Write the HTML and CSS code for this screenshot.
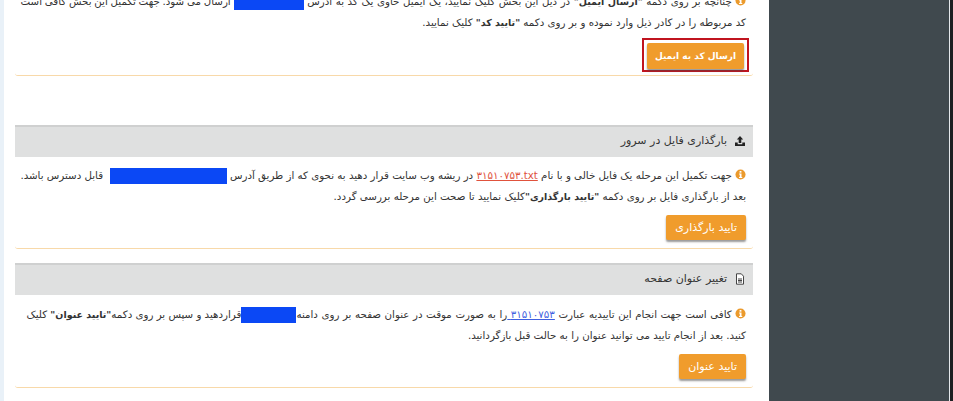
FILE: index.html
```html
<!DOCTYPE html>
<html lang="fa" dir="rtl">
<head>
<meta charset="utf-8">
<title>تایید مالکیت</title>
<link rel="stylesheet" href="styles.css">
</head>
<body>
<div class="page">
  <aside class="rail-end"></aside>
  <aside class="sidebar"></aside>
  <main class="main">
    <section class="panel panel-first">
      <div class="body">
        <p class="text"><svg class="info" viewBox="0 0 12 12"><circle cx="6" cy="6" r="5.5"/><rect class="i" x="5" y="2.2" width="2" height="1.8"/><path class="i" d="M4.4 5h2.7v3.7h.8v1H4.4v-1h.8V6h-.8z"/></svg> <span class="loose">چنانچه بر روی دکمه <b>"ارسال ایمیل"</b> در ذیل این بخش کلیک نمایید، یک ایمیل حاوی یک کد به آدرس</span> <span class="mask m1"></span> <span class="snug">ارسال می شود. جهت تکمیل این بخش کافی است</span><br>کد مربوطه را در کادر ذیل وارد نموده و بر روی دکمه <b>"تایید کد"</b> کلیک نمایید.</p>
        <div class="outline"><button class="btn btn-bold">ارسال کد به ایمیل</button></div>
      </div>
    </section>
    <section class="panel panel-second">
      <h3 class="head"><svg class="hicon" viewBox="0 0 12 12"><path d="M6 1 9.2 4.4H7.3V8H4.7V4.4H2.8z"/><path d="M1 7.6h2.7v1.6h4.6V7.6H11V11H1z"/></svg> بارگذاری فایل در سرور</h3>
      <div class="body">
        <p class="text"><svg class="info" viewBox="0 0 12 12"><circle cx="6" cy="6" r="5.5"/><rect class="i" x="5" y="2.2" width="2" height="1.8"/><path class="i" d="M4.4 5h2.7v3.7h.8v1H4.4v-1h.8V6h-.8z"/></svg> جهت تکمیل این مرحله یک فایل خالی و با نام <a class="red" href="#">۳۱۵۱۰۷۵۳.txt</a> در ریشه وب سایت قرار دهید به نحوی که از طریق آدرس <span class="mask m2"></span> &nbsp;قابل دسترس باشد.<br>بعد از بارگذاری فایل بر روی دکمه <b>"تایید بارگذاری"</b>کلیک نمایید تا صحت این مرحله بررسی گردد.</p>
        <button class="btn">تایید بارگذاری</button>
      </div>
    </section>
    <section class="panel">
      <h3 class="head"><svg class="hicon" viewBox="0 0 12 12"><path class="doc" d="M2.5.8h4.8l2.2 2.4v8H2.5z"/><path class="lines" d="M4 6h4M4 7.5h4M4 9h4"/></svg> تغییر عنوان صفحه</h3>
      <div class="body">
        <p class="text"><svg class="info" viewBox="0 0 12 12"><circle cx="6" cy="6" r="5.5"/><rect class="i" x="5" y="2.2" width="2" height="1.8"/><path class="i" d="M4.4 5h2.7v3.7h.8v1H4.4v-1h.8V6h-.8z"/></svg> <span class="loose">کافی است جهت انجام این تاییدیه عبارت <a class="blue" href="#">۳۱۵۱۰۷۵۳ </a>را به صورت موقت در عنوان صفحه بر روی دامنه</span><span class="mask m3"></span>قراردهید و سپس بر روی دکمه<b>"تایید عنوان"</b> کلیک<br>کنید. بعد از انجام تایید می توانید عنوان را به حالت قبل بازگردانید.</p>
        <button class="btn">تایید عنوان</button>
      </div>
    </section>
  </main>
  <aside class="rail-start"></aside>
</div>
</body>
</html>
```

FILE: styles.css
```css
* { box-sizing: border-box; }
html, body { margin: 0; height: 401px; overflow: hidden; background: #fff; }
body { font-family: "DejaVu Sans", sans-serif; color: #333; }
.page { display: flex; height: 401px; overflow: hidden; }
.rail-end { width: 3px; background: #1c2022; }
.sidebar { width: 181px; background: #40494e; border-right: 1px solid #e4e8ec; }
.main { width: 765px; padding: 0 16px 0 11px; background: #fff; }
.rail-start { width: 4px; background: #e9f1f8; }
.panel { margin-bottom: 14px; border-bottom: 1px solid #f8d9a9; border-radius: 0 0 3px 3px; }
.panel-first { margin-top: -9px; margin-bottom: 49px; }
.head { display: flex; align-items: center; gap: 7px; height: 32px; margin: 0; padding: 0 7px 3px; font-size: 11px; font-weight: 400; color: #333; background: #dfe0e0; border-top: 2px solid #cfd0d0; }
.hicon { width: 12px; height: 12px; fill: #222; flex: none; }
.doc { fill: #fff; stroke: #444; stroke-width: 1; }
.lines { fill: none; stroke: #444; stroke-width: 1; }
.body { padding: 9px 7px 8px; }
.panel-second .body { padding-top: 8px; }
.panel-first .body { padding: 0 7px 3px; }
.text { height: 42px; margin: 0 0 8px; font-size: 10.25px; line-height: 21px; white-space: nowrap; }
.panel-first .text { margin-bottom: 5px; }
.text b { font-size: 9.5px; }
.loose { word-spacing: .3px; }
.snug { word-spacing: -.5px; }
.info { width: 11px; height: 11px; vertical-align: -1px; fill: #eb9a2c; }
.info .i { fill: #fff; }
.mask { display: inline-block; height: 16px; background: #0b48f5; vertical-align: middle; }
.m1 { width: 70px; }
.m2 { width: 117px; }
.m3 { width: 55px; }
.red { color: #e0523c; direction: ltr; unicode-bidi: embed; }
.blue { color: #3f5fe0; }
.btn { display: block; height: 25px; padding: 0 9px; border: 0; border-radius: 2px; font: 400 11px "DejaVu Sans", sans-serif; color: #fff; background: #f09c2c; box-shadow: 0 2px 2px rgba(70,70,70,.55); }
.btn-bold { font-weight: 700; font-size: 9px; height: 26px; width: 97px; padding: 0; }
.outline { width: 107px; height: 34px; padding: 3px 3px; margin: 0 -3px 0 0; border: 2px solid #c0141f; }
```
